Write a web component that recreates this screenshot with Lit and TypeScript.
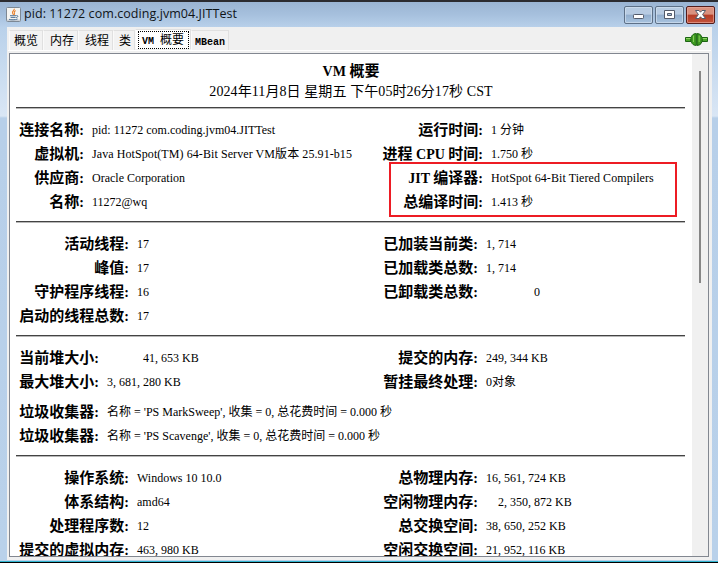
import { LitElement, html, css, svg, nothing } from "lit";
import { customElement, property } from "lit/decorators.js";

interface Field {
  label: string;
  value: string;
  /** leading blank cells of a right-aligned figure */
  pad?: number;
}

interface Section {
  labelLeft: number;
  labelRight: number;
  left: Field[];
  right: Field[];
  wide?: Field[];
}

const SECTIONS: Section[] = [
  {
    labelLeft: 74,
    labelRight: 473,
    left: [
      { label: "连接名称", value: "pid: 11272 com.coding.jvm04.JITTest" },
      { label: "虚拟机", value: "Java HotSpot(TM) 64-Bit Server VM版本 25.91-b15" },
      { label: "供应商", value: "Oracle Corporation" },
      { label: "名称", value: "11272@wq" },
    ],
    right: [
      { label: "运行时间", value: "1 分钟" },
      { label: "进程 CPU 时间", value: "1.750 秒" },
      { label: "JIT 编译器", value: "HotSpot 64-Bit Tiered Compilers" },
      { label: "总编译时间", value: "1.413 秒" },
    ],
  },
  {
    labelLeft: 119,
    labelRight: 468,
    left: [
      { label: "活动线程", value: "17" },
      { label: "峰值", value: "17" },
      { label: "守护程序线程", value: "16" },
      { label: "启动的线程总数", value: "17" },
    ],
    right: [
      { label: "已加装当前类", value: "1,714" },
      { label: "已加载类总数", value: "1,714" },
      { label: "已卸载类总数", value: "0", pad: 8 },
    ],
  },
  {
    labelLeft: 89,
    labelRight: 468,
    left: [
      { label: "当前堆大小", value: "41,653 KB", pad: 6 },
      { label: "最大堆大小", value: "3,681,280 KB" },
    ],
    right: [
      { label: "提交的内存", value: "249,344 KB" },
      { label: "暂挂最终处理", value: "0对象" },
    ],
    wide: [
      { label: "垃圾收集器", value: "名称 = 'PS MarkSweep', 收集 = 0, 总花费时间 = 0.000 秒" },
      { label: "垃圾收集器", value: "名称 = 'PS Scavenge', 收集 = 0, 总花费时间 = 0.000 秒" },
    ],
  },
  {
    labelLeft: 119,
    labelRight: 468,
    left: [
      { label: "操作系统", value: "Windows 10 10.0" },
      { label: "体系结构", value: "amd64" },
      { label: "处理程序数", value: "12" },
      { label: "提交的虚拟内存", value: "463,980 KB" },
    ],
    right: [
      { label: "总物理内存", value: "16,561,724 KB" },
      { label: "空闲物理内存", value: "2,350,872 KB", pad: 2 },
      { label: "总交换空间", value: "38,650,252 KB" },
      { label: "空闲交换空间", value: "21,952,116 KB" },
    ],
  },
];

/** Wraps the runs of a string that match a pattern in a styled span. */
const mark = (text: string, pattern: RegExp, cls: string) =>
  text.split(pattern).map((part, i) => (i % 2 ? html`<span class=${cls}>${part}</span>` : part));

@customElement("vm-field")
class VmField extends LitElement {
  @property({ attribute: false }) field!: Field;
  @property({ type: Number }) labelWidth = 0;

  static styles = css`
    :host { display: flex; height: 24px; line-height: 24px; white-space: nowrap; }
    .label { flex: none; text-align: right; font-size: 15px; font-weight: 700; }
    .latin { font-size: 14px; }
    .value { flex: none; margin-left: 8px; font-size: 12px; }
    .hotspot { letter-spacing: 0.08px; }
    .comma { letter-spacing: 3px; }
  `;

  render() {
    const { label, value, pad } = this.field;
    return html`
      <div class="label" style="width:${this.labelWidth}px">${mark(label + ":", /([ A-Z:]+)/, "latin")}</div>
      <div class="value ${value.includes("HotSpot") ? "hotspot" : ""}" style=${pad ? `padding-left:${pad * 6}px` : nothing}>${mark(value, /((?<=\d),(?=\d))/, "comma")}</div>
    `;
  }
}

@customElement("vm-section")
class VmSection extends LitElement {
  @property({ attribute: false }) section!: Section;

  static styles = css`
    :host { display: block; padding-bottom: 7px; }
    .rule { height: 1px; margin: 0 7px 9px 6px; background: #444; border-bottom: 1px solid #b8b8b8; }
    .columns { display: flex; position: relative; }
    .column { width: 0; }
    .wide { margin-top: 6px; }
    .mark { position: absolute; left: 379px; top: 44px; width: 288px; height: 55px; box-sizing: border-box; border: 2px solid #ed1c24; }
  `;

  render() {
    const s = this.section;
    return html`
      <div class="rule"></div>
      <div class="columns">
        <div class="column">${s.left.map((f) => html`<vm-field .field=${f} .labelWidth=${s.labelLeft}></vm-field>`)}</div>
        <div class="column">${s.right.map((f) => html`<vm-field .field=${f} .labelWidth=${s.labelRight}></vm-field>`)}</div>
        ${s === SECTIONS[0] ? html`<div class="mark"></div>` : nothing}
      </div>
      ${s.wide
        ? html`<div class="wide">${s.wide.map((f) => html`<vm-field .field=${f} .labelWidth=${s.labelLeft}></vm-field>`)}</div>`
        : nothing}
    `;
  }
}

const javaIcon = svg`
  <rect x=".5" y=".5" width="14" height="14" rx="1" fill="#f4f4f2" stroke="#7d8894"/>
  <path d="M1 12.5H14V14H1Z" fill="#c9ced4"/>
  <path d="M8.2 1.8C9 3.4 5.6 4.2 6.6 6.2C7 7 7.4 7.2 7.2 8M9.6 3.6C7.8 4.6 8 5.4 8.4 6.2C8.7 6.9 8.5 7.3 8 7.9" fill="none" stroke="#e8822e" stroke-width="1.1"/>
  <path d="M4 8.7H10M4.6 10.4H9.6M3 12.3C5 13 9 13 11.6 12M10.3 8.6C12.6 8.2 12.2 10.3 10.2 10.6" fill="none" stroke="#4f7396" stroke-width="1"/>`;

const plugIcon = svg`
  <path d="M.5 4.5H6V8.500H.5ZM17 4.500H22.500V8.500H17Z" fill="#4aa52a" stroke="#1c6412"/>
  <path d="M1 5.500H6M17 5.500H22" stroke="#8fd464"/>
  <path d="M11.300 .6V12.400C7.500 12.400 6 9.700 6 6.500S7.500 .6 11.300 .6Z" fill="#3e9a20" stroke="#1c6412"/>
  <path d="M12 .6V12.400C15.700 12.400 17.200 9.700 17.200 6.500S15.700 .6 12 .6Z" fill="#3e9a20" stroke="#1c6412"/>
  <path d="M8.500 2.600V9M14.200 2.600V9" stroke="#84cc58"/>`;

@customElement("app-root")
class AppRoot extends LitElement {
  static styles = css`
    :host {
      display: flex; flex-direction: column; box-sizing: border-box;
      width: 718px; height: 563px; overflow: hidden;
      border-top: 2px solid #2b2b30; border-bottom: 1px solid #000;
      color: #000; background: #b9d1ea;
      font-family: "Liberation Serif", "Noto Sans CJK SC", serif;
    }
    .titlebar {
      display: flex; height: 25px; flex: none; padding: 0 3px 0 6px;
      background: linear-gradient(#9ab4d3, #a6c0dd 50%, #b8d0ea);
    }
    .java { width: 15px; height: 15px; margin: 5px 3px 0 0; }
    .title { flex: 1; font: 12.5px/24px "Open Sans", sans-serif; letter-spacing: 0.06px; white-space: nowrap; color: #101418; }
    .buttons { display: flex; gap: 2px; padding-top: 4px; }
    .button {
      width: 29px; height: 18px; box-sizing: border-box; border: 1px solid #5d7087; border-radius: 2px;
      box-shadow: inset 0 0 0 1px #d3e1f0aa;
      background: linear-gradient(#b7cbe2 45%, #92aecd 50%, #a8c3df);
    }
    .close { border-color: #541c1a; box-shadow: inset 0 0 0 1px #eaa99caa; background: linear-gradient(#d9917f 45%, #b63c26 50%, #c3543c); }
    .button svg { display: block; width: 27px; height: 16px; }
    .frame {
      flex: 1; min-height: 0; display: flex; flex-direction: column; padding: 0 6px 1px 7px;
      border-bottom: 1px solid #2fb4cf;
      background: linear-gradient(#b9d1ea, #d9e6f5 89px, #b7cfe9 91px, #b9d1ea);
    }
    .client { flex: 1; min-height: 0; display: flex; flex-direction: column; background: #f0f0f0; padding: 3px 2px 0; }
    .bar { display: flex; justify-content: space-between; height: 20px; }
    .tabs { display: flex; }
    .tab {
      box-sizing: border-box; height: 20px; border: 1px solid #e0e0e0; border-left-color: #fafafa; border-bottom: 0; padding-left: 6px;
      font-size: 12px; line-height: 21px; white-space: nowrap; background: #f2f2f2;
    }
    .t34 { width: 34px; padding-left: 4px; } .t35 { width: 35px; } .t22 { width: 22px; padding-left: 5px; } .t38 { width: 38px; padding-left: 3px; }
    .active { width: 56px; height: 20px; margin-top: -1px; padding: 1px; background: #fff; }
    .focus { box-sizing: border-box; width: 51px; height: 18px; margin-left: 1px; padding-left: 3px; border: 1px dotted #000; line-height: 17px; }
    .mono { font: 700 10px/1 "Liberation Mono", monospace; }
    .plug { width: 23px; height: 13px; margin: 3px 2px 0 0; }
    .panel { flex: 1; min-height: 0; display: flex; flex-direction: column; margin: 0 -1px; padding: 2px 1px 0; border: solid #fff; border-width: 1px 0 0; }
    .viewport { flex: none; height: 504px; width: 700px; box-sizing: border-box; border: 1px solid #828790; background: #fff; display: flex; overflow: hidden; }
    .report { width: 682px; flex: none; }
    .heading { padding-top: 7px; text-align: center; font-size: 15px; font-weight: 700; line-height: 20px; }
    .heading .latin { font-size: 14px; }
    .date { text-align: center; font-size: 14px; line-height: 20px; letter-spacing: 0.09px; margin-bottom: 5px; }
    .track { flex: 1; background: #f0f0f0; padding: 17px 0 0 7px; }
    .thumb { width: 2px; height: 212px; background: #868686; }
  `;

  render() {
    return html`
      <div class="titlebar">
        <svg class="java" viewBox="0 0 15 15">${javaIcon}</svg>
        <div class="title">pid: 11272 com.coding.jvm04.JITTest</div>
        <div class="buttons">
          <div class="button"><svg viewBox="0 0 27 16"><rect x="8.5" y="7.5" width="10" height="4" rx=".8" fill="#fff" stroke="#535b6b"/></svg></div>
          <div class="button"><svg viewBox="0 0 27 16"><path d="M8.500 3.500H18.500V11.500H8.500ZM11.500 6.500V8.500H15.500V6.500Z" fill="#fff" fill-rule="evenodd" stroke="#535b6b"/></svg></div>
          <div class="button close"><svg viewBox="0 0 27 16"><path d="M8.500 3.500H12L13.500 5.200L15 3.500H18.500L15.600 7.500L18.500 11.500H15L13.500 9.800L12 11.500H8.500L11.400 7.500Z" fill="#fff" stroke="#535b6b"/></svg></div>
        </div>
      </div>
      <div class="frame">
        <div class="client">
          <div class="bar">
            <div class="tabs">
              <div class="tab t34">概览</div>
              <div class="tab t35">内存</div>
              <div class="tab t35">线程</div>
              <div class="tab t22">类</div>
              <div class="tab active"><div class="focus"><span class="mono">VM </span>概要</div></div>
              <div class="tab t38"><span class="mono">MBean</span></div>
            </div>
            <svg class="plug" viewBox="0 0 23 13">${plugIcon}</svg>
          </div>
          <div class="panel">
            <div class="viewport">
              <div class="report">
                <div class="heading"><span class="latin">VM </span>概要</div>
                <div class="date">2024年11月8日 星期五 下午05时26分17秒 CST</div>
                ${SECTIONS.map((s) => html`<vm-section .section=${s}></vm-section>`)}
              </div>
              <div class="track"><div class="thumb"></div></div>
            </div>
          </div>
        </div>
      </div>
    `;
  }
}
